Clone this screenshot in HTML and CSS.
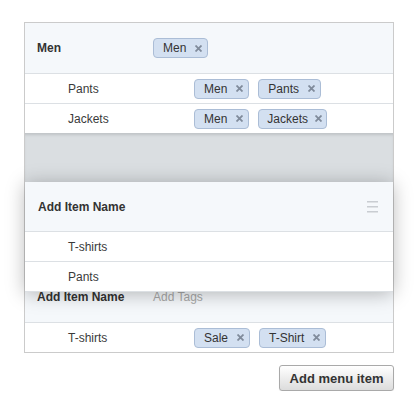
FILE: index.html
```html
<!DOCTYPE html>
<html>
<head>
<meta charset="utf-8">
<link rel="stylesheet" href="styles.css">
</head>
<body>
<div class="page">
  <div class="menu">
    <div class="group">
      <div class="head">
        <span class="label bold">Men</span>
        <div class="tags">
          <span class="tag">Men<svg class="x" viewBox="0 0 7 7"><path d="M0.5 0.5L6.5 6.5M6.5 0.5L0.5 6.5"/></svg></span>
        </div>
      </div>
      <div class="row">
        <span class="label sub">Pants</span>
        <div class="tags">
          <span class="tag">Men<svg class="x" viewBox="0 0 7 7"><path d="M0.5 0.5L6.5 6.5M6.5 0.5L0.5 6.5"/></svg></span>
          <span class="tag">Pants<svg class="x" viewBox="0 0 7 7"><path d="M0.5 0.5L6.5 6.5M6.5 0.5L0.5 6.5"/></svg></span>
        </div>
      </div>
      <div class="row last">
        <span class="label sub">Jackets</span>
        <div class="tags">
          <span class="tag">Men<svg class="x" viewBox="0 0 7 7"><path d="M0.5 0.5L6.5 6.5M6.5 0.5L0.5 6.5"/></svg></span>
          <span class="tag tight">Jackets<svg class="x" viewBox="0 0 7 7"><path d="M0.5 0.5L6.5 6.5M6.5 0.5L0.5 6.5"/></svg></span>
        </div>
      </div>
    </div>

    <div class="placeholder"></div>

    <div class="group">
      <div class="head">
        <span class="label bold">Add Item Name</span>
        <span class="hint">Add Tags</span>
      </div>
      <div class="row last">
        <span class="label sub">T-shirts</span>
        <div class="tags">
          <span class="tag">Sale<svg class="x" viewBox="0 0 7 7"><path d="M0.5 0.5L6.5 6.5M6.5 0.5L0.5 6.5"/></svg></span>
          <span class="tag">T-Shirt<svg class="x" viewBox="0 0 7 7"><path d="M0.5 0.5L6.5 6.5M6.5 0.5L0.5 6.5"/></svg></span>
        </div>
      </div>
    </div>

    <div class="dragging">
      <div class="head drag-head">
        <span class="label bold">Add Item Name</span>
        <span class="handle"><i></i><i></i><i></i></span>
      </div>
      <div class="row">
        <span class="label sub">T-shirts</span>
      </div>
      <div class="row">
        <span class="label sub">Pants</span>
      </div>
    </div>
  </div>

  <div class="actions">
    <button class="btn">Add menu item</button>
  </div>
</div>
</body>
</html>
```

FILE: styles.css
```css
* { box-sizing: border-box; }

body {
  margin: 0;
  padding: 22px 0 0 24px;
  background: #ffffff;
  font-family: "Liberation Sans", Arial, sans-serif;
  font-size: 12px;
  color: #333333;
}

.page { width: 370px; }

.menu {
  position: relative;
  border: 1px solid #cbcbcb;
  background: #ffffff;
}

.head {
  display: flex;
  align-items: center;
  height: 51px;
  padding-left: 12px;
  background: #f5f8fb;
  border-bottom: 1px solid #dce0e4;
}

.row {
  display: flex;
  align-items: center;
  height: 30px;
  padding-left: 43px;
  background: #ffffff;
  border-bottom: 1px solid #dce0e4;
}

.row.last { border-bottom: none; height: 29px; }

.label { flex: none; }
.head .label { width: 116px; }
.row .label { width: 126px; }

.bold { font-weight: bold; color: #333333; }
.sub { color: #3a3a3a; }

.hint { color: #a8a8a8; }

.tags {
  display: flex;
  gap: 9px;
}

.tag {
  display: inline-flex;
  align-items: center;
  height: 20px;
  padding: 0 5px 0 9px;
  background: #d3e0f1;
  border: 1px solid #abbdd6;
  border-radius: 4px;
  color: #333333;
  line-height: 18px;
}

.tag.tight { padding-left: 8px; padding-right: 4px; }

.x {
  width: 7px;
  height: 7px;
  margin-left: 9px;
  fill: none;
  stroke: #808b9b;
  stroke-width: 1.8;
}

.tight .x { margin-left: 7px; }

.placeholder {
  height: 139px;
  background: #dadee1;
  box-shadow: inset 0 3px 3px -1px rgba(0, 0, 0, 0.12);
}

.dragging {
  position: absolute;
  top: 159px;
  left: 0;
  right: 0;
  background: #ffffff;
  box-shadow: 0 2px 18px rgba(0, 0, 0, 0.28);
}

.drag-head {
  height: 50px;
  padding-left: 13px;
  padding-right: 15px;
}

.drag-head .label { width: auto; flex: 1; }

.dragging .row:last-child { height: 30px; }

.handle {
  display: flex;
  flex-direction: column;
  gap: 3px;
  width: 11px;
}

.handle i {
  display: block;
  height: 2px;
  background: #c9cdd2;
  border-bottom: 1px solid #dfe2e5;
}

.actions {
  display: flex;
  justify-content: flex-end;
  margin-top: 12px;
}

.btn {
  width: 115px;
  height: 26px;
  padding: 0;
  font-family: "Liberation Sans", Arial, sans-serif;
  font-size: 13px;
  font-weight: bold;
  color: #333333;
  background: linear-gradient(#ffffff, #dcdcdc);
  border: 1px solid #a9a9a9;
  border-radius: 3px;
  box-shadow: 0 1px 1px rgba(0, 0, 0, 0.08);
}
```
